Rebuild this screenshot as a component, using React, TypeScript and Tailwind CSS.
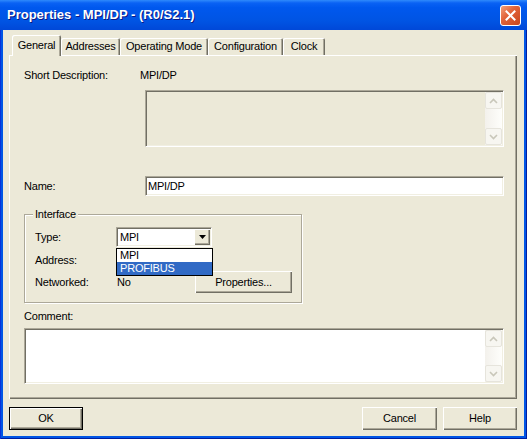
import React from "react";

const raised =
  "shadow-[inset_1px_1px_0_#ffffff,inset_-1px_-1px_0_#716f64,inset_-2px_-2px_0_#aca899]";
const sunkenBorder =
  "border border-t-[#aca899] border-l-[#aca899] border-b-white border-r-white shadow-[inset_1px_1px_0_#716f64,inset_-1px_-1px_0_#f1efe2]";

function Chevron({ up }: { up?: boolean }) {
  return (
    <svg width="9" height="6" viewBox="0 0 9 6">
      <path
        d={up ? "M1 5 L4.5 1.5 L8 5" : "M1 1 L4.5 4.5 L8 1"}
        fill="none"
        stroke="#c9c7ba"
        strokeWidth="1.6"
      />
    </svg>
  );
}

function ScrollBar() {
  return (
    <div className="w-[17px] h-full flex flex-col justify-between bg-[linear-gradient(90deg,#f3f1ec,#fefefb)]">
      <div className="h-[17px] w-[17px] rounded-[2px] border border-[#e6e4dc] bg-[#f7f6f1] flex items-center justify-center">
        <Chevron up />
      </div>
      <div className="h-[17px] w-[17px] rounded-[2px] border border-[#e6e4dc] bg-[#f7f6f1] flex items-center justify-center">
        <Chevron />
      </div>
    </div>
  );
}

function Tab({ label, w, active }: { label: string; w: number; active?: boolean }) {
  return (
    <div
      style={{ width: w }}
      className={
        active
          ? "relative z-10 h-[21px] -mb-px pb-[1px] bg-[#ece9d8] flex items-center justify-center rounded-t-[2px] shadow-[inset_1px_1px_0_#ffffff,inset_-1px_0_0_#716f64,inset_-2px_0_0_#aca899]"
          : "h-[17px] bg-[#ece9d8] flex items-center justify-center rounded-t-[2px] shadow-[inset_1px_1px_0_#ffffff,inset_-1px_0_0_#716f64,inset_-2px_0_0_#aca899]"
      }
    >
      {label}
    </div>
  );
}

export default function App() {
  return (
    <div className="w-[527px] h-[439px] flex flex-col bg-[#0055e5] shadow-[inset_1px_0_0_#0831d9,inset_-1px_-1px_0_#001ea0] font-['Liberation_Sans',Arial,sans-serif] text-[11px] leading-[13px] tracking-[-0.2px] text-black overflow-hidden">
      {/* Title bar */}
      <div className="h-[30px] flex items-center justify-between pl-[7px] pr-[6px] bg-[linear-gradient(180deg,#2f8afc_0%,#0a62f4_10%,#0058ee_25%,#0054e3_70%,#0048d8_100%)]">
        <span className="text-white font-bold text-[13px] leading-[16px] tracking-normal [text-shadow:1px_1px_0_#0a1883]">
          Properties - MPI/DP - (R0/S2.1)
        </span>
        <div className="w-[21px] h-[21px] rounded-[3px] border border-white bg-[linear-gradient(135deg,#f2a07b_0%,#e2643a_40%,#c9461c_100%)] flex items-center justify-center">
          <svg width="11" height="11" viewBox="0 0 11 11">
            <path d="M1.5 1.5 L9.5 9.5 M9.5 1.5 L1.5 9.5" stroke="#ffffff" strokeWidth="2" strokeLinecap="square" />
          </svg>
        </div>
      </div>

      {/* Client area */}
      <div className="flex-1 mx-[3px] mb-[3px] bg-[#ece9d8] flex flex-col">
        {/* Tabs */}
        <div className="h-[25px] flex items-end pl-[9px]">
          <Tab label="General" w={49} active />
          <Tab label="Addresses" w={59} />
          <Tab label="Operating Mode" w={88} />
          <Tab label="Configuration" w={75} />
          <Tab label="Clock" w={42} />
        </div>

        {/* Panel */}
        <div className={`ml-[6px] mr-[7px] h-[344px] flex flex-col pl-[15px] pr-[13px] ${raised}`}>
          <div className="mt-[14px] h-[13px] flex">
            <span className="w-[116px]">Short Description:</span>
            <span>MPI/DP</span>
          </div>

          <div className={`mt-[8px] ml-[121px] h-[57px] flex bg-[#ece9d8] ${sunkenBorder} p-[1px]`}>
            <div className="flex-1" />
            <ScrollBar />
          </div>

          <div className="mt-[29px] h-[20px] flex items-center">
            <span className="w-[121px]">Name:</span>
            <div className={`flex-1 h-[20px] bg-white ${sunkenBorder} pl-[2px] flex items-center`}>
              MPI/DP
            </div>
          </div>

          <fieldset className="mt-[12px] w-[278px] border border-[#aca899] shadow-[inset_1px_1px_0_#ffffff,1px_1px_0_#ffffff] pb-[9px]">
            <legend className="ml-[8px] px-[2px] bg-[#ece9d8] leading-[13px]">Interface</legend>
            <div className="pl-[10px] flex flex-col">
              <div className="mt-[6px] h-[20px] flex items-center">
                <span className="w-[81px]">Type:</span>
                <div className="relative w-[96px] h-[20px]">
                  <div className={`w-full h-full bg-white ${sunkenBorder} flex items-center justify-between pl-[3px] pr-[1px]`}>
                    <span>MPI</span>
                    <div className={`w-[16px] h-[16px] bg-[#ece9d8] flex items-center justify-center ${raised}`}>
                      <svg width="7" height="4" viewBox="0 0 7 4">
                        <path d="M0 0 H7 L3.5 4 Z" fill="#000000" />
                      </svg>
                    </div>
                  </div>
                  <div className="absolute left-0 top-[21px] w-[97px] z-20 border border-black bg-white">
                    <div className="h-[13px] pl-[3px] leading-[13px]">MPI</div>
                    <div className="h-[13px] pl-[3px] leading-[13px] bg-[#316ac5] text-white">PROFIBUS</div>
                  </div>
                </div>
              </div>
              <div className="mt-[7px] h-[13px] flex items-center">
                <span>Address:</span>
              </div>
              <div className="mt-[4px] h-[22px] flex items-center">
                <span className="w-[82px]">Networked:</span>
                <span className="w-[78px]">No</span>
                <div className={`w-[97px] h-[22px] bg-[#ece9d8] flex items-center justify-center ${raised}`}>
                  Properties...
                </div>
              </div>
            </div>
          </fieldset>

          <div className="mt-[7px] h-[13px]">Comment:</div>

          <div className={`mt-[5px] h-[56px] flex bg-white ${sunkenBorder} p-[1px]`}>
            <div className="flex-1" />
            <ScrollBar />
          </div>
        </div>

        {/* Buttons */}
        <div className="mt-[8px] h-[23px] flex pl-[6px] pr-[7px]">
          <div className="w-[74px] h-[23px] border border-black bg-[#ece9d8] flex items-center justify-center shadow-[inset_1px_1px_0_#ffffff,inset_-1px_-1px_0_#716f64,inset_-2px_-2px_0_#aca899]">
            OK
          </div>
          <div className="flex-1" />
          <div className={`w-[75px] h-[23px] bg-[#ece9d8] flex items-center justify-center ${raised}`}>
            Cancel
          </div>
          <div className={`ml-[6px] w-[74px] h-[23px] bg-[#ece9d8] flex items-center justify-center ${raised}`}>
            Help
          </div>
        </div>
      </div>
    </div>
  );
}
